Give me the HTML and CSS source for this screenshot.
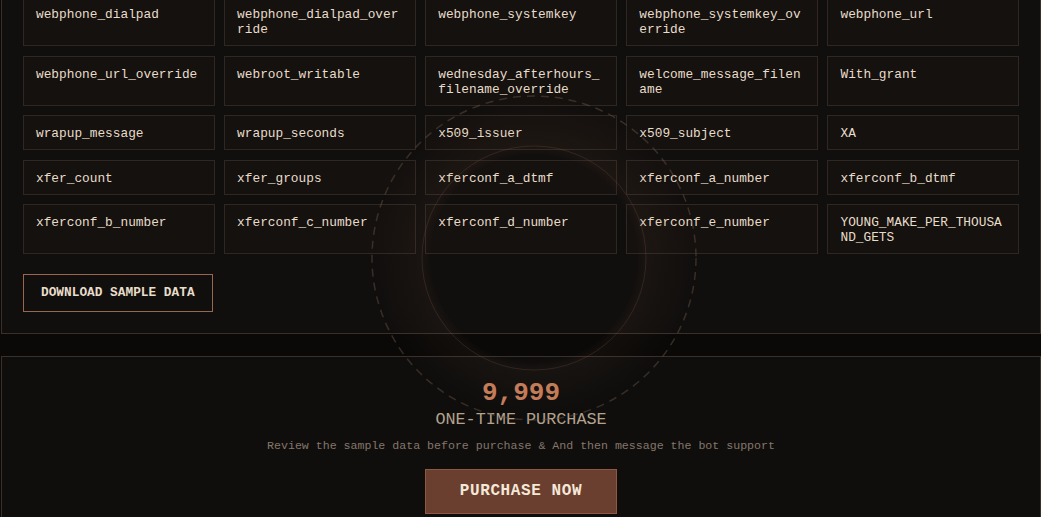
FILE: index.html
```html
<!DOCTYPE html>
<html lang="en">
<head>
    <meta charset="utf-8">
    <title>Sample data</title>
    <meta name="viewport" content="width=device-width, initial-scale=1">
    <link rel="stylesheet" href="styles.css">
</head>
<body>
    <!-- decorative rings behind the checkout -->
    <div class="rings" aria-hidden="true">
        <svg width="340" height="340" viewBox="0 0 340 340">
            <defs>
                <radialGradient id="ring-glow" cx="170" cy="170" r="170" gradientUnits="userSpaceOnUse">
                    <stop offset="0" stop-color="#a06a4a" stop-opacity="0"/>
                    <stop offset="0.6" stop-color="#a06a4a" stop-opacity="0"/>
                    <stop offset="0.66" stop-color="#a06a4a" stop-opacity="0.06"/>
                    <stop offset="0.8" stop-color="#a06a4a" stop-opacity="0.03"/>
                    <stop offset="0.96" stop-color="#a06a4a" stop-opacity="0"/>
                </radialGradient>
            </defs>
            <circle cx="170" cy="170" r="168" fill="url(#ring-glow)"/>
            <circle cx="170" cy="170" r="112" fill="none" stroke="#6e5040" stroke-opacity="0.3" stroke-width="1"/>
            <circle cx="170" cy="170" r="162" fill="none" stroke="#6a5444" stroke-opacity="0.45" stroke-width="1.5" stroke-dasharray="8 6"/>
        </svg>
    </div>

    <main class="page">
        <section class="panel fields">
            <div class="field-grid">
                <div class="field">webphone_dialpad</div>
                <div class="field">webphone_dialpad_override</div>
                <div class="field">webphone_systemkey</div>
                <div class="field">webphone_systemkey_override</div>
                <div class="field">webphone_url</div>

                <div class="field">webphone_url_override</div>
                <div class="field">webroot_writable</div>
                <div class="field">wednesday_afterhours_filename_override</div>
                <div class="field">welcome_message_filename</div>
                <div class="field">With_grant</div>

                <div class="field">wrapup_message</div>
                <div class="field">wrapup_seconds</div>
                <div class="field">x509_issuer</div>
                <div class="field">x509_subject</div>
                <div class="field">XA</div>

                <div class="field">xfer_count</div>
                <div class="field">xfer_groups</div>
                <div class="field">xferconf_a_dtmf</div>
                <div class="field">xferconf_a_number</div>
                <div class="field">xferconf_b_dtmf</div>

                <div class="field">xferconf_b_number</div>
                <div class="field">xferconf_c_number</div>
                <div class="field">xferconf_d_number</div>
                <div class="field">xferconf_e_number</div>
                <div class="field">YOUNG_MAKE_PER_THOUSAND_GETS</div>
            </div>
            <button class="btn-outline" type="button">Download sample data</button>
        </section>

        <section class="panel checkout">
            <div class="price">9,999</div>
            <div class="price-note">One-time purchase</div>
            <p class="hint">Review the sample data before purchase &amp; And then message the bot support</p>
            <button class="btn-solid" type="button">Purchase now</button>
        </section>
    </main>
</body>
</html>
```

FILE: styles.css
```css
html {
    overflow: hidden;
}

body {
    margin: 0;
    background: #0a0908;
    color: #e8ddca;
    font-family: "Courier New", "Liberation Mono", monospace;
}

.page {
    display: flex;
    flex-direction: column;
    gap: 22px;
    margin-top: -26px;
    padding-left: 1px;
}

.panel {
    background: #110f0e;
    border: 1px solid #3a302a;
}

.fields {
    padding: 21px;
}

.field-grid {
    display: grid;
    grid-template-columns: repeat(5, 1fr);
    gap: 0.6rem;
}

.field {
    background: #15110f;
    border: 1px solid #2f2722;
    padding: 10px 12px 8px;
    font-size: 12.8px;
    line-height: 15px;
    word-break: break-all;
}

.btn-outline {
    display: block;
    width: max-content;
    margin-top: 20px;
    padding: 10px 17px;
    background: transparent;
    border: 1px solid #9a6650;
    color: #e8ddca;
    font-family: inherit;
    font-size: 12.8px;
    font-weight: bold;
    line-height: 16px;
    text-transform: uppercase;
    cursor: pointer;
}

.checkout {
    display: flex;
    flex-direction: column;
    align-items: center;
    padding: 21px 21px 30px;
    background: #0f0e0d;
}

.price {
    color: #c57d5a;
    font-size: 26px;
    font-weight: bold;
    line-height: 30px;
}

.price-note {
    margin-top: 1px;
    color: #b3a38e;
    font-size: 16.8px;
    line-height: 22px;
    text-transform: uppercase;
}

.hint {
    margin: 7px 0 0;
    color: #85766a;
    font-size: 11.6px;
    line-height: 16px;
}

.btn-solid {
    margin-top: 15px;
    padding: 13px 34px;
    background: #6a3f2f;
    border: 1px solid #8e5842;
    color: #f4e8d8;
    font-family: inherit;
    font-size: 16px;
    font-weight: bold;
    letter-spacing: 0.6px;
    line-height: 17px;
    text-transform: uppercase;
    cursor: pointer;
}

.rings {
    position: fixed;
    left: 364px;
    top: 88px;
    width: 340px;
    height: 340px;
    pointer-events: none;
}

.rings svg {
    display: block;
}
```
